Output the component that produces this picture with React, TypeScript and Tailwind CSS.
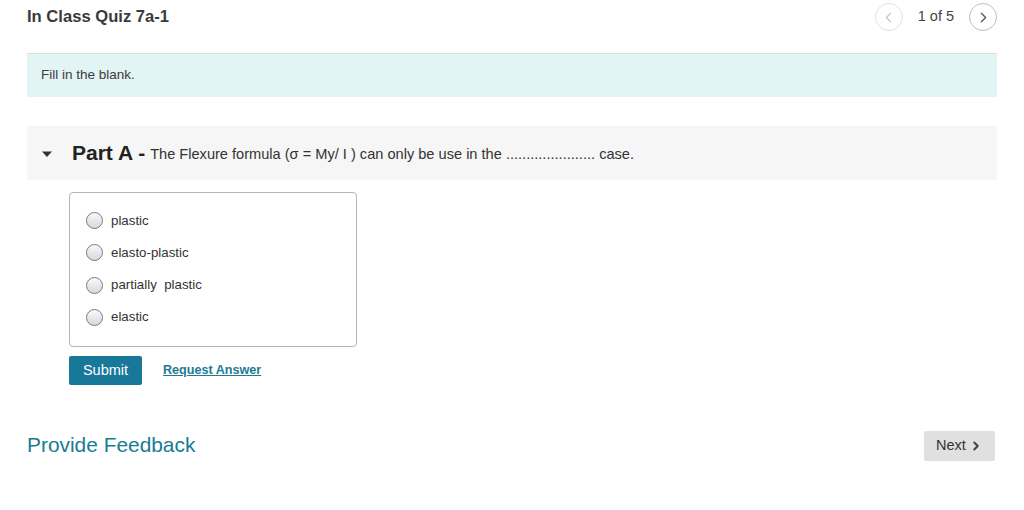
import { ChevronLeft, ChevronRight } from "lucide-react";

const options = ["plastic", "elasto-plastic", "partially\u00a0 plastic", "elastic"];

export default function App() {
  return (
    <div className="w-[1024px] h-[510px] bg-white text-[#333] font-['Liberation_Sans',Arial,sans-serif]">
      <div className="px-[27px]">
        {/* Header */}
        <div className="flex items-center justify-between h-[33px] pt-[1px]">
          <h1 className="text-[16.6px] font-bold text-[#3a3a3a]">In Class Quiz 7a-1</h1>
          <div className="flex items-center gap-[15px]">
            <button className="w-[28px] h-[28px] rounded-full border border-[#e2e2e2] flex items-center justify-center text-[#c4c4c4]">
              <ChevronLeft size={17} strokeWidth={1.5} />
            </button>
            <span className="text-[14.5px] text-[#444]">1 of 5</span>
            <button className="w-[28px] h-[28px] rounded-full border border-[#bdbdbd] flex items-center justify-center text-[#555]">
              <ChevronRight size={17} strokeWidth={1.75} />
            </button>
          </div>
        </div>

        {/* Instructions */}
        <div className="mt-[20px] h-[44px] bg-[#e3f4f4] border-t border-[#d3e3e3] flex items-center px-[14px]">
          <p className="text-[13.5px] text-[#3c3c3c]">Fill in the blank.</p>
        </div>

        {/* Part A */}
        <div className="mt-[29px] h-[54px] bg-[#f6f6f6] flex items-center">
          <svg width="12" height="8" viewBox="0 0 12 8" className="ml-[14px] mt-[2px]">
            <path d="M1 1.5 L11 1.5 L6 7 Z" fill="#333" />
          </svg>
          <span className="ml-[19px] text-[21px] font-bold text-[#222]">Part A - </span>
          <span className="ml-[5px] mt-[3px] text-[14.6px] text-[#333]">
            The Flexure formula (σ = My/ I ) can only be use in the ...................... case.
          </span>
        </div>

        {/* Options */}
        <div className="ml-[42px] mt-[12px] w-[288px] h-[155px] border border-[#b5b5b5] rounded-[4px] flex flex-col pt-[18px] pl-[16px] gap-[13.3px]">
          {options.map((o) => (
            <label key={o} className="flex items-center gap-[8px] h-[19px]">
              <span className="w-[17px] h-[17px] rounded-full border border-[#7a7a7a] bg-gradient-to-b from-[#fafafa] to-[#d8d8d8]" />
              <span className="text-[13.3px] text-[#333]">{o}</span>
            </label>
          ))}
        </div>

        {/* Actions */}
        <div className="ml-[42px] mt-[9px] flex items-center gap-[21px]">
          <button className="w-[73px] h-[29px] bg-[#18789a] rounded-[2px] text-white text-[14.5px]">Submit</button>
          <a className="text-[12.6px] font-bold text-[#1f7a94] underline">Request Answer</a>
        </div>

        {/* Footer */}
        <div className="mt-[46px] flex items-center justify-between">
          <a className="text-[20.9px] text-[#177c92] -mt-[2px]">Provide Feedback</a>
          <button className="w-[71px] h-[30px] mr-[2px] bg-[#e0e0e0] rounded-[2px] text-[14.5px] text-[#333] flex items-center justify-center gap-[3px]">
            Next
            <ChevronRight size={14} strokeWidth={3.5} className="text-[#444]" />
          </button>
        </div>
      </div>
    </div>
  );
}
